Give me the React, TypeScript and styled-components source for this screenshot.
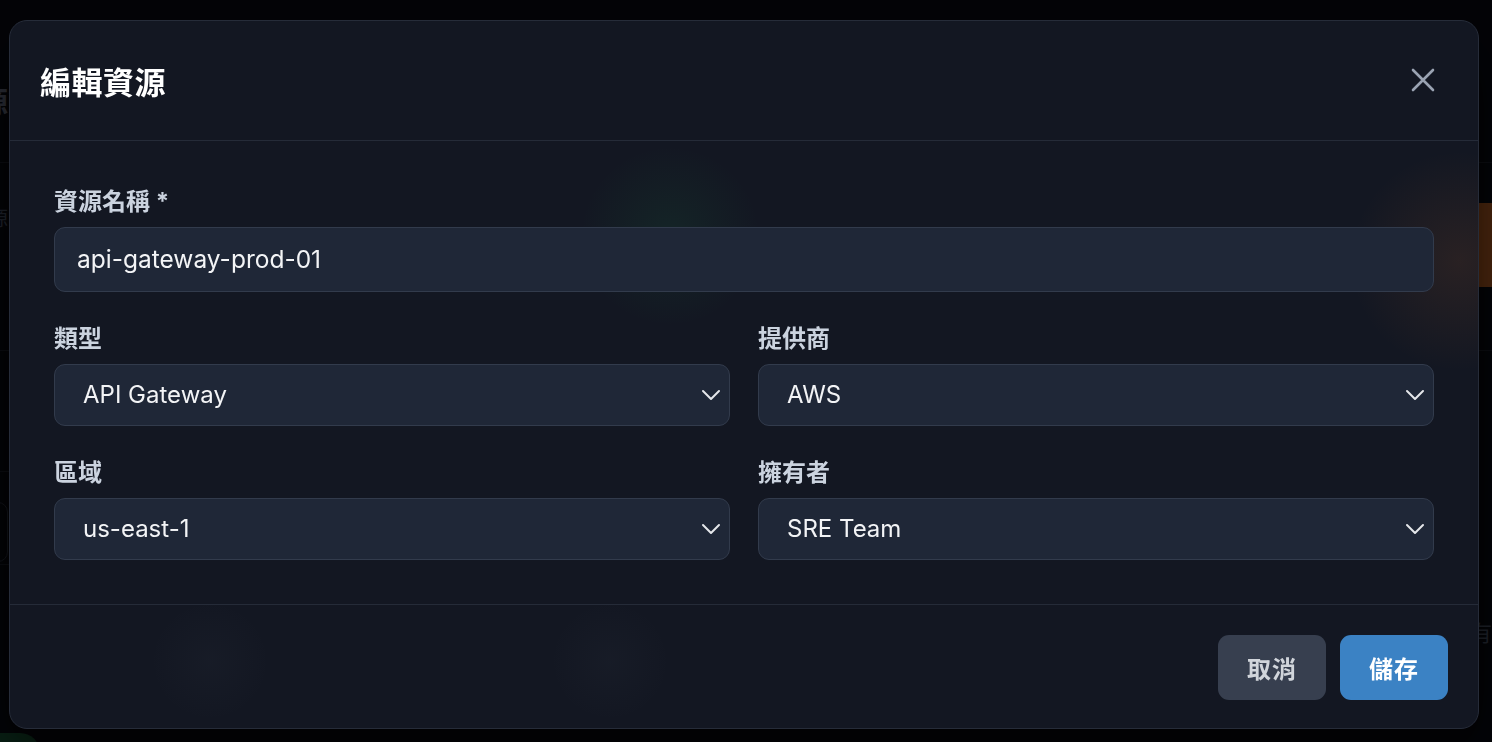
import React from "react";
import styled, { createGlobalStyle } from "styled-components";

const GlobalStyle = createGlobalStyle`
  html, body {
    margin: 0;
    padding: 0;
    background: #06070a;
    font-family: Inter, "Noto Sans CJK TC", sans-serif;
  }
  body {
    width: 1492px;
    height: 742px;
    overflow: hidden;
  }
  * { box-sizing: border-box; }
`;

/* ---------- page behind the dialog ---------- */

const Page = styled.div`
  width: 1492px;
  height: 742px;
  padding: 78px 0 0 0;
  margin-left: -52px;
  color: #4b5563;
  display: flex;
  flex-direction: column;
`;

const PageTitle = styled.h1`
  margin: 0 0 40px 0;
  font-size: 30px;
  font-weight: 700;
  color: #6b7280;
`;

const StatRow = styled.div`
  display: grid;
  grid-template-columns: repeat(4, 1fr);
  gap: 24px;
  border-top: 1px solid #1a1d24;
  border-bottom: 1px solid #1a1d24;
  padding: 40px 0;
  width: 1600px;
`;

const StatCard = styled.div`
  display: flex;
  justify-content: space-between;
  align-items: flex-start;
`;

const StatText = styled.div`
  display: flex;
  flex-direction: column;
  gap: 4px;
`;

const StatLabel = styled.span`
  font-size: 20px;
  color: #4b5563;
`;

const StatValue = styled.span`
  font-size: 40px;
  font-weight: 700;
  color: #6b7280;
`;

const StatSub = styled.span`
  font-size: 18px;
  color: #4b5563;
`;

const StatIcon = styled.div<{ $tone: string }>`
  width: 84px;
  height: 84px;
  border-radius: 10px;
  background: ${(p) => p.$tone};
`;

const FilterBar = styled.div`
  margin-top: 120px;
  height: 94px;
  border-top: 1px solid #1a1d24;
  border-bottom: 1px solid #1a1d24;
  padding: 30px 0;
`;

const FilterInput = styled.div`
  width: 60px;
  height: 60px;
  border: 1px solid #2a2f38;
  border-radius: 10px;
`;

const TableHead = styled.div`
  margin-top: 50px;
  display: flex;
  justify-content: flex-end;
  font-size: 22px;
  color: #4b5563;
  width: 1566px;
`;

const TableRow = styled.div`
  margin-top: 86px;
  display: grid;
  grid-template-columns: 242px 390px 360px 380px 130px 200px;
  font-size: 22px;
  color: #6b7280;
  align-items: center;
`;

const Badge = styled.span`
  width: 92px;
  height: 40px;
  border-radius: 20px;
  background: #14532d;
`;

/* ---------- dialog ---------- */

const Backdrop = styled.div`
  position: fixed;
  inset: 0;
  background: rgba(3, 4, 7, 0.62);
  display: flex;
  align-items: center;
  justify-content: center;
  padding-top: 6px;
`;

const Modal = styled.div`
  width: 1470px;
  margin-left: -4px;
  border-radius: 18px;
  border: 1px solid #262c39;
  background:
    radial-gradient(circle at 660px 215px, rgba(34, 197, 94, 0.08) 0, rgba(34, 197, 94, 0) 90px),
    radial-gradient(circle at 1450px 240px, rgba(234, 120, 40, 0.1) 0, rgba(234, 120, 40, 0) 110px),
    radial-gradient(circle at 200px 640px, rgba(148, 163, 184, 0.03) 0, rgba(148, 163, 184, 0) 60px),
    radial-gradient(circle at 600px 640px, rgba(148, 163, 184, 0.03) 0, rgba(148, 163, 184, 0) 60px),
    #131722;
  box-shadow: 0 24px 60px rgba(0, 0, 0, 0.6);
  display: flex;
  flex-direction: column;
  overflow: hidden;
`;

const Header = styled.div`
  height: 120px;
  padding: 0 33px 0 30px;
  display: flex;
  align-items: center;
  justify-content: space-between;
  border-bottom: 1px solid #252b38;
`;

const Title = styled.h2`
  margin: 0;
  font-size: 31px;
  font-weight: 700;
  color: #ffffff;
  letter-spacing: 0.5px;
`;

const CloseButton = styled.button`
  background: none;
  border: none;
  padding: 10px;
  display: flex;
  cursor: pointer;
`;

const Body = styled.div`
  padding: 44px 44px;
  display: grid;
  grid-template-columns: 1fr 1fr;
  column-gap: 28px;
  row-gap: 30px;
  border-bottom: 1px solid #252b38;
`;

const Field = styled.div<{ $wide?: boolean }>`
  display: flex;
  flex-direction: column;
  gap: 8px;
  grid-column: ${(p) => (p.$wide ? "1 / -1" : "auto")};
`;

const Label = styled.label`
  font-size: 24px;
  line-height: 34px;
  font-weight: 700;
  color: #cbd3df;
`;

const TextInput = styled.div`
  height: 65px;
  padding: 0 22px;
  display: flex;
  align-items: center;
  background: #1f2737;
  border: 1px solid #323b4c;
  border-radius: 11px;
  font-size: 24.5px;
  color: #f3f4f6;
`;

const Select = styled.div`
  height: 62px;
  padding: 0 8px 0 28px;
  display: flex;
  align-items: center;
  justify-content: space-between;
  background: #1f2737;
  border: 1px solid #323b4c;
  border-radius: 11px;
  font-size: 24px;
  color: #f3f4f6;
`;

const Footer = styled.div`
  padding: 30px 30px 28px;
  display: flex;
  justify-content: flex-end;
  gap: 14px;
`;

const Button = styled.button<{ $primary?: boolean }>`
  width: 108px;
  height: 65px;
  border: none;
  border-radius: 11px;
  font-family: Inter, "Noto Sans CJK TC", sans-serif;
  font-size: 24px;
  font-weight: 700;
  letter-spacing: 1px;
  cursor: pointer;
  background: ${(p) => (p.$primary ? "#3b82c4" : "#373f4f")};
  color: ${(p) => (p.$primary ? "#ffffff" : "#d1d5db")};
`;

const Chevron = () => (
  <svg width="20" height="12" viewBox="0 0 20 12" fill="none">
    <path d="M2 2 L10 10 L18 2" stroke="#e5e7eb" strokeWidth="2" strokeLinecap="round" strokeLinejoin="round" />
  </svg>
);

const CloseIcon = () => (
  <svg width="24" height="24" viewBox="0 0 24 24" fill="none">
    <path d="M2 2 L22 22 M22 2 L2 22" stroke="#9aa3b2" strokeWidth="2.6" strokeLinecap="round" />
  </svg>
);

const selects = [
  { label: "類型", value: "API Gateway" },
  { label: "提供商", value: "AWS" },
  { label: "區域", value: "us-east-1" },
  { label: "擁有者", value: "SRE Team" },
];

const App: React.FC = () => {
  return (
    <>
      <GlobalStyle />
      <Page>
        <PageTitle>資源管理</PageTitle>
        <StatRow>
          <StatCard>
            <StatText>
              <StatLabel>總資源</StatLabel>
              <StatValue>5</StatValue>
              <StatSub>ys</StatSub>
            </StatText>
          </StatCard>
          <StatCard />
          <StatCard />
          <StatCard>
            <span />
            <StatIcon $tone="#c2611c" />
          </StatCard>
        </StatRow>
        <FilterBar>
          <FilterInput />
        </FilterBar>
        <TableHead>擁有者</TableHead>
        <TableRow>
          <Badge />
          <span>api-gateway-prod-01</span>
          <span>API Gateway</span>
          <span>AWS</span>
          <span>us-east-1</span>
          <span>SRE Team</span>
        </TableRow>
      </Page>

      <Backdrop>
        <Modal>
          <Header>
            <Title>編輯資源</Title>
            <CloseButton aria-label="close">
              <CloseIcon />
            </CloseButton>
          </Header>
          <Body>
            <Field $wide>
              <Label>資源名稱 *</Label>
              <TextInput>api-gateway-prod-01</TextInput>
            </Field>
            {selects.map((s) => (
              <Field key={s.label}>
                <Label>{s.label}</Label>
                <Select>
                  <span>{s.value}</span>
                  <Chevron />
                </Select>
              </Field>
            ))}
          </Body>
          <Footer>
            <Button>取消</Button>
            <Button $primary>儲存</Button>
          </Footer>
        </Modal>
      </Backdrop>
    </>
  );
};

export default App;
